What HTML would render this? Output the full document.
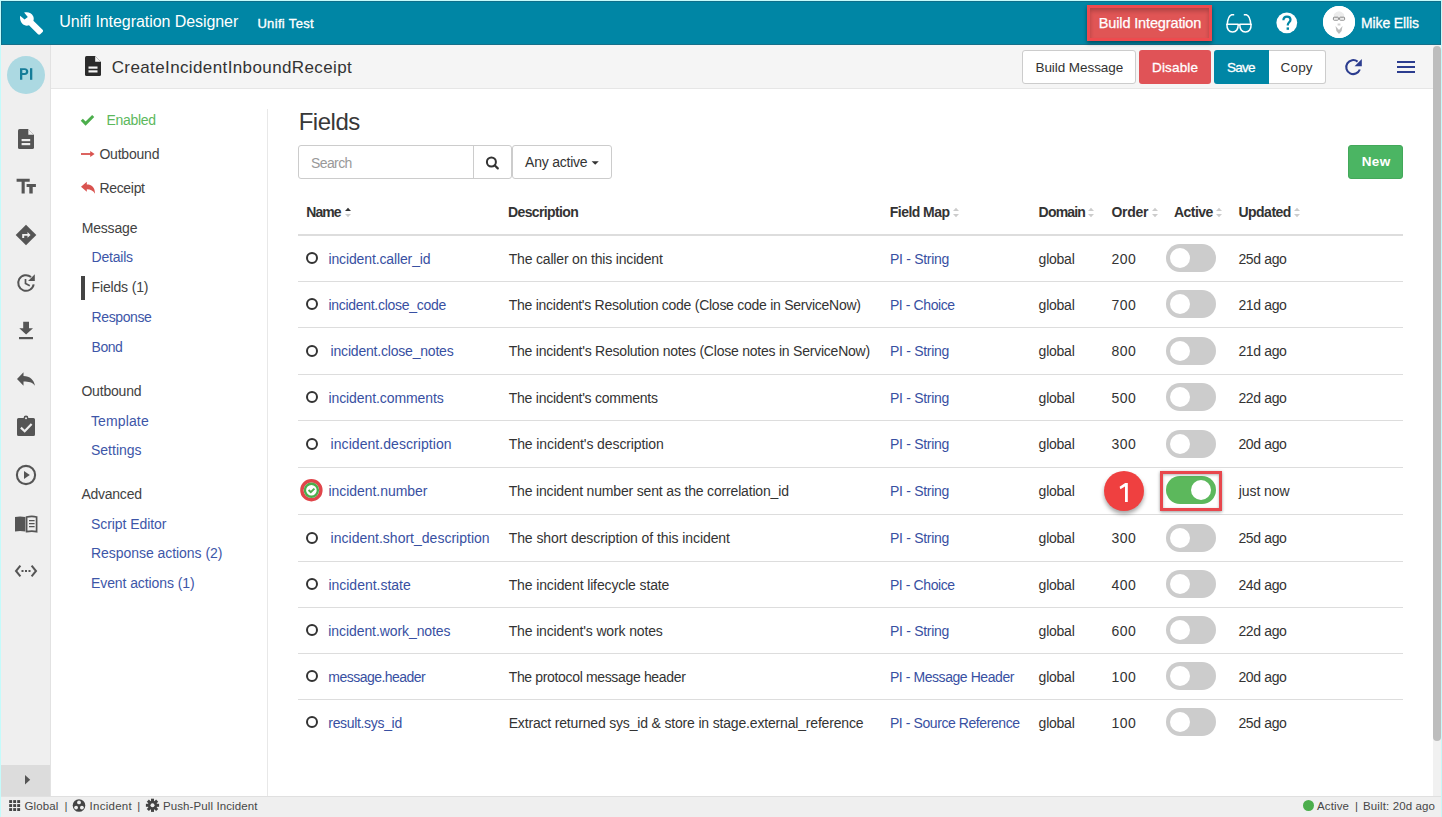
<!DOCTYPE html>
<html><head><meta charset="utf-8"><style>
html,body{margin:0;padding:0;}
body{width:1442px;height:817px;position:relative;overflow:hidden;background:#fff;font-family:"Liberation Sans",sans-serif;}
.a{position:absolute;}
.t{position:absolute;white-space:nowrap;line-height:1;}
</style></head><body>
<div class="a" style="left:0px;top:0px;width:1442px;height:817px;background:#c4fbfb;"></div>
<div class="a" style="left:1px;top:1px;width:1440px;height:816px;background:#ffffff;"></div>
<div class="a" style="left:1px;top:1px;width:1440px;height:44px;background:#0086a5;"></div>
<div class="a" style="left:1px;top:44px;width:1440px;height:1px;background:#16708a;"></div>
<div class="a" style="left:51px;top:45px;width:1382px;height:1px;background:#c6eef8;"></div>
<div class="a" style="left:1px;top:45px;width:49px;height:1px;background:#bfe6f0;"></div>
<div class="a" style="left:1px;top:1px;width:1440px;height:1px;background:#0f6f8a;"></div>
<div class="a" style="left:1px;top:1px;width:1px;height:44px;background:#0f6f8a;"></div>
<div class="a" style="left:1440px;top:1px;width:1px;height:44px;background:#0f6f8a;"></div>
<div class="a" style="left:1px;top:45px;width:50px;height:751px;background:#efefef;border-right:1px solid #e2e2e2;box-sizing:border-box;"></div>
<div class="a" style="left:1px;top:765px;width:49px;height:31px;background:#dcdcdc;"></div>
<div class="a" style="left:51px;top:45px;width:1382px;height:44px;background:#f5f5f5;border-bottom:1px solid #e6e6e6;box-sizing:border-box;"></div>
<div class="a" style="left:267px;top:109px;width:1px;height:687px;background:#e8e8e8;"></div>
<div class="a" style="left:1px;top:796px;width:1440px;height:21px;background:#efefef;border-top:1px solid #e0e0e0;box-sizing:border-box;"></div>
<div class="a" style="left:1433px;top:45px;width:8px;height:751px;background:#f1f1f1;"></div>
<div class="a" style="left:1433px;top:46px;width:8px;height:695px;background:#bdbdbd;border-radius:4px;"></div>
<div class="t" style="left:59.30px;top:14.16px;font-size:16px;color:#ffffff;letter-spacing:-0.062px;">Unifi Integration Designer</div>
<div class="t" style="left:257.40px;top:16.70px;font-size:13px;color:#ffffff;letter-spacing:0.341px;-webkit-text-stroke:0.35px #fff;">Unifi Test</div>
<div class="a" style="left:1087px;top:5px;width:125px;height:36px;background:#e05555;border:3px solid #ee4a4e;box-sizing:border-box;box-shadow:0 2px 4px rgba(0,0,0,.45), inset 0 3px 4px rgba(0,0,0,.22);"></div>
<div class="t" style="left:1098.80px;top:15.73px;font-size:14.5px;color:#ffffff;letter-spacing:-0.141px;-webkit-text-stroke:0.25px #fff;">Build Integration</div>
<div class="t" style="left:1361.00px;top:16.15px;font-size:14px;color:#ffffff;letter-spacing:-0.128px;-webkit-text-stroke:0.3px #fff;">Mike Ellis</div>
<div class="a" style="left:1323px;top:6px;width:32px;height:32px;background:#ffffff;border-radius:50%;"></div>
<div class="t" style="left:111.70px;top:58.51px;font-size:17px;color:#333333;letter-spacing:0.386px;">CreateIncidentInboundReceipt</div>
<div class="a" style="left:1022px;top:50px;width:114px;height:34px;background:#fff;border:1px solid #cccccc;border-radius:3px;box-sizing:border-box;"></div>
<div class="t" style="left:1035.50px;top:61.17px;font-size:13.5px;color:#333333;letter-spacing:-0.072px;">Build Message</div>
<div class="a" style="left:1139px;top:50px;width:72px;height:34px;background:#e05357;border-radius:3px;"></div>
<div class="t" style="left:1152.00px;top:61.17px;font-size:13.5px;color:#fff;letter-spacing:0.163px;-webkit-text-stroke:0.3px #fff;">Disable</div>
<div class="a" style="left:1214px;top:50px;width:55px;height:34px;background:#0086a5;border-radius:3px 0 0 3px;"></div>
<div class="t" style="left:1227.00px;top:61.17px;font-size:13.5px;color:#fff;letter-spacing:-0.727px;-webkit-text-stroke:0.3px #fff;">Save</div>
<div class="a" style="left:1269px;top:50px;width:57px;height:34px;background:#fff;border:1px solid #cccccc;border-left:none;border-radius:0 3px 3px 0;box-sizing:border-box;"></div>
<div class="t" style="left:1280.50px;top:61.17px;font-size:13.5px;color:#333333;letter-spacing:0.193px;">Copy</div>
<div class="a" style="left:7px;top:56px;width:38px;height:38px;background:#acd9e2;border-radius:50%;"></div>
<svg class="a" style="left:18px;top:66px;" width="16" height="16" viewBox="0 0 16 16"><path d="M2 2.2 H6.6 C9.0 2.2 10.3 3.6 10.3 5.6 C10.3 7.6 9.0 9.0 6.6 9.0 H4.3 V13.8 H2 Z M4.3 4.1 V7.1 H6.5 C7.5 7.1 8.0 6.5 8.0 5.6 C8.0 4.7 7.5 4.1 6.5 4.1 Z" fill="#167d99"/><rect x="12" y="2.2" width="2.3" height="11.6" fill="#167d99"/></svg>
<div class="t" style="left:106.50px;top:112.85px;font-size:14px;color:#5cb85c;letter-spacing:-0.313px;">Enabled</div>
<div class="t" style="left:99.40px;top:146.85px;font-size:14px;color:#424242;letter-spacing:-0.204px;">Outbound</div>
<div class="t" style="left:99.40px;top:180.75px;font-size:14px;color:#424242;letter-spacing:-0.31px;">Receipt</div>
<div class="t" style="left:81.70px;top:221.15px;font-size:14px;color:#424242;letter-spacing:-0.173px;">Message</div>
<div class="t" style="left:91.60px;top:250.15px;font-size:14px;color:#3d56a8;letter-spacing:-0.228px;">Details</div>
<div class="a" style="left:81px;top:276px;width:4px;height:24px;background:#444;"></div>
<div class="t" style="left:91.60px;top:279.85px;font-size:14px;color:#424242;letter-spacing:-0.164px;">Fields (1)</div>
<div class="t" style="left:91.60px;top:309.75px;font-size:14px;color:#3d56a8;letter-spacing:-0.41px;">Response</div>
<div class="t" style="left:91.60px;top:340.15px;font-size:14px;color:#3d56a8;letter-spacing:-0.497px;">Bond</div>
<div class="t" style="left:81.40px;top:384.35px;font-size:14px;color:#424242;letter-spacing:-0.19px;">Outbound</div>
<div class="t" style="left:91.00px;top:413.65px;font-size:14px;color:#3d56a8;letter-spacing:0.123px;">Template</div>
<div class="t" style="left:91.00px;top:443.15px;font-size:14px;color:#3d56a8;letter-spacing:-0.001px;">Settings</div>
<div class="t" style="left:81.40px;top:487.15px;font-size:14px;color:#424242;letter-spacing:-0.243px;">Advanced</div>
<div class="t" style="left:91.00px;top:516.65px;font-size:14px;color:#3d56a8;letter-spacing:-0.069px;">Script Editor</div>
<div class="t" style="left:91.00px;top:546.15px;font-size:14px;color:#3d56a8;letter-spacing:-0.047px;">Response actions (2)</div>
<div class="t" style="left:91.00px;top:576.15px;font-size:14px;color:#3d56a8;letter-spacing:-0.092px;">Event actions (1)</div>
<div class="t" style="left:298.70px;top:109.98px;font-size:24px;color:#383838;letter-spacing:-0.476px;">Fields</div>
<div class="a" style="left:298px;top:145px;width:214px;height:34px;background:#fff;border:1px solid #cccccc;border-radius:3px;box-sizing:border-box;"></div>
<div class="a" style="left:473px;top:145px;width:1px;height:34px;background:#cccccc;"></div>
<div class="t" style="left:311.00px;top:155.95px;font-size:14px;color:#999999;letter-spacing:-0.596px;">Search</div>
<div class="a" style="left:512px;top:145px;width:100px;height:34px;background:#fff;border:1px solid #cccccc;border-radius:3px;box-sizing:border-box;"></div>
<div class="t" style="left:525.10px;top:154.75px;font-size:14px;color:#333333;letter-spacing:-0.234px;">Any active</div>
<div class="a" style="left:1348px;top:145px;width:55px;height:34px;background:#4bb563;border:1px solid #43a85a;border-radius:3px;box-sizing:border-box;"></div>
<div class="t" style="left:1361.70px;top:155.37px;font-size:13.5px;color:#fff;font-weight:bold;letter-spacing:0.345px;">New</div>
<div class="t" style="left:306.30px;top:205.15px;font-size:14px;color:#333333;font-weight:bold;letter-spacing:-0.983px;">Name</div>
<div class="t" style="left:508.00px;top:205.15px;font-size:14px;color:#333333;font-weight:bold;letter-spacing:-0.62px;">Description</div>
<div class="t" style="left:889.80px;top:205.15px;font-size:14px;color:#333333;font-weight:bold;letter-spacing:-0.543px;">Field Map</div>
<div class="t" style="left:1038.60px;top:205.15px;font-size:14px;color:#333333;font-weight:bold;letter-spacing:-0.802px;">Domain</div>
<div class="t" style="left:1111.40px;top:205.15px;font-size:14px;color:#333333;font-weight:bold;letter-spacing:-0.287px;">Order</div>
<div class="t" style="left:1174.00px;top:205.15px;font-size:14px;color:#333333;font-weight:bold;letter-spacing:-0.54px;">Active</div>
<div class="t" style="left:1238.40px;top:205.15px;font-size:14px;color:#333333;font-weight:bold;letter-spacing:-0.5px;">Updated</div>
<div class="a" style="left:298px;top:234px;width:1105px;height:2px;background:#dddddd;"></div>
<div class="t" style="left:328.40px;top:251.65px;font-size:14px;color:#3850a2;letter-spacing:-0.124px;">incident.caller_id</div>
<div class="t" style="left:508.70px;top:251.65px;font-size:14px;color:#333333;letter-spacing:-0.179px;">The caller on this incident</div>
<div class="t" style="left:889.90px;top:251.65px;font-size:14px;color:#3850a2;letter-spacing:-0.283px;">PI - String</div>
<div class="t" style="left:1038.60px;top:251.65px;font-size:14px;color:#333333;letter-spacing:-0.236px;">global</div>
<div class="t" style="left:1111.40px;top:251.65px;font-size:14px;color:#333333;letter-spacing:0.51px;">200</div>
<div class="t" style="left:1238.40px;top:251.65px;font-size:14px;color:#333333;letter-spacing:-0.352px;">25d ago</div>
<div class="a" style="left:306px;top:252px;width:12px;height:12px;border:2px solid #333;border-radius:50%;box-sizing:border-box;"></div>
<div class="a" style="left:1166px;top:244px;width:50px;height:28px;background:#cccccc;border-radius:14px;"></div>
<div class="a" style="left:1170px;top:248px;width:20px;height:20px;background:#fff;border-radius:50%;"></div>
<div class="t" style="left:328.40px;top:297.65px;font-size:14px;color:#3850a2;letter-spacing:-0.288px;">incident.close_code</div>
<div class="t" style="left:508.70px;top:297.65px;font-size:14px;color:#333333;letter-spacing:-0.26px;">The incident's Resolution code (Close code in ServiceNow)</div>
<div class="t" style="left:889.90px;top:297.65px;font-size:14px;color:#3850a2;letter-spacing:-0.403px;">PI - Choice</div>
<div class="t" style="left:1038.60px;top:297.65px;font-size:14px;color:#333333;letter-spacing:-0.236px;">global</div>
<div class="t" style="left:1111.40px;top:297.65px;font-size:14px;color:#333333;letter-spacing:0.51px;">700</div>
<div class="t" style="left:1238.40px;top:297.65px;font-size:14px;color:#333333;letter-spacing:-0.352px;">21d ago</div>
<div class="a" style="left:306px;top:298px;width:12px;height:12px;border:2px solid #333;border-radius:50%;box-sizing:border-box;"></div>
<div class="a" style="left:1166px;top:290px;width:50px;height:28px;background:#cccccc;border-radius:14px;"></div>
<div class="a" style="left:1170px;top:294px;width:20px;height:20px;background:#fff;border-radius:50%;"></div>
<div class="t" style="left:330.60px;top:344.15px;font-size:14px;color:#3850a2;letter-spacing:-0.197px;">incident.close_notes</div>
<div class="t" style="left:508.70px;top:344.15px;font-size:14px;color:#333333;letter-spacing:-0.227px;">The incident's Resolution notes (Close notes in ServiceNow)</div>
<div class="t" style="left:889.90px;top:344.15px;font-size:14px;color:#3850a2;letter-spacing:-0.283px;">PI - String</div>
<div class="t" style="left:1038.60px;top:344.15px;font-size:14px;color:#333333;letter-spacing:-0.236px;">global</div>
<div class="t" style="left:1111.40px;top:344.15px;font-size:14px;color:#333333;letter-spacing:0.51px;">800</div>
<div class="t" style="left:1238.40px;top:344.15px;font-size:14px;color:#333333;letter-spacing:-0.352px;">21d ago</div>
<div class="a" style="left:306px;top:345px;width:12px;height:12px;border:2px solid #333;border-radius:50%;box-sizing:border-box;"></div>
<div class="a" style="left:1166px;top:337px;width:50px;height:28px;background:#cccccc;border-radius:14px;"></div>
<div class="a" style="left:1170px;top:341px;width:20px;height:20px;background:#fff;border-radius:50%;"></div>
<div class="t" style="left:328.40px;top:390.65px;font-size:14px;color:#3850a2;letter-spacing:-0.081px;">incident.comments</div>
<div class="t" style="left:508.70px;top:390.65px;font-size:14px;color:#333333;letter-spacing:-0.233px;">The incident's comments</div>
<div class="t" style="left:889.90px;top:390.65px;font-size:14px;color:#3850a2;letter-spacing:-0.283px;">PI - String</div>
<div class="t" style="left:1038.60px;top:390.65px;font-size:14px;color:#333333;letter-spacing:-0.236px;">global</div>
<div class="t" style="left:1111.40px;top:390.65px;font-size:14px;color:#333333;letter-spacing:0.51px;">500</div>
<div class="t" style="left:1238.40px;top:390.65px;font-size:14px;color:#333333;letter-spacing:-0.352px;">22d ago</div>
<div class="a" style="left:306px;top:391px;width:12px;height:12px;border:2px solid #333;border-radius:50%;box-sizing:border-box;"></div>
<div class="a" style="left:1166px;top:383px;width:50px;height:28px;background:#cccccc;border-radius:14px;"></div>
<div class="a" style="left:1170px;top:387px;width:20px;height:20px;background:#fff;border-radius:50%;"></div>
<div class="t" style="left:330.60px;top:437.15px;font-size:14px;color:#3850a2;letter-spacing:0.056px;">incident.description</div>
<div class="t" style="left:508.70px;top:437.15px;font-size:14px;color:#333333;letter-spacing:-0.095px;">The incident's description</div>
<div class="t" style="left:889.90px;top:437.15px;font-size:14px;color:#3850a2;letter-spacing:-0.283px;">PI - String</div>
<div class="t" style="left:1038.60px;top:437.15px;font-size:14px;color:#333333;letter-spacing:-0.236px;">global</div>
<div class="t" style="left:1111.40px;top:437.15px;font-size:14px;color:#333333;letter-spacing:0.51px;">300</div>
<div class="t" style="left:1238.40px;top:437.15px;font-size:14px;color:#333333;letter-spacing:-0.352px;">20d ago</div>
<div class="a" style="left:306px;top:438px;width:12px;height:12px;border:2px solid #333;border-radius:50%;box-sizing:border-box;"></div>
<div class="a" style="left:1166px;top:430px;width:50px;height:28px;background:#cccccc;border-radius:14px;"></div>
<div class="a" style="left:1170px;top:434px;width:20px;height:20px;background:#fff;border-radius:50%;"></div>
<div class="t" style="left:328.40px;top:484.15px;font-size:14px;color:#3850a2;letter-spacing:-0.036px;">incident.number</div>
<div class="t" style="left:508.70px;top:484.15px;font-size:14px;color:#333333;letter-spacing:-0.171px;">The incident number sent as the correlation_id</div>
<div class="t" style="left:889.90px;top:484.15px;font-size:14px;color:#3850a2;letter-spacing:-0.283px;">PI - String</div>
<div class="t" style="left:1038.60px;top:484.15px;font-size:14px;color:#333333;letter-spacing:-0.236px;">global</div>
<div class="t" style="left:1238.75px;top:484.15px;font-size:14px;color:#333333;letter-spacing:-0.061px;">just now</div>
<div class="a" style="left:1166px;top:476px;width:50px;height:28px;background:#5cb85c;border-radius:14px;"></div>
<div class="a" style="left:1191px;top:480px;width:20px;height:20px;background:#fff;border-radius:50%;"></div>
<div class="t" style="left:330.60px;top:531.15px;font-size:14px;color:#3850a2;letter-spacing:0.01px;">incident.short_description</div>
<div class="t" style="left:508.70px;top:531.15px;font-size:14px;color:#333333;letter-spacing:-0.077px;">The short description of this incident</div>
<div class="t" style="left:889.90px;top:531.15px;font-size:14px;color:#3850a2;letter-spacing:-0.283px;">PI - String</div>
<div class="t" style="left:1038.60px;top:531.15px;font-size:14px;color:#333333;letter-spacing:-0.236px;">global</div>
<div class="t" style="left:1111.40px;top:531.15px;font-size:14px;color:#333333;letter-spacing:0.51px;">300</div>
<div class="t" style="left:1238.40px;top:531.15px;font-size:14px;color:#333333;letter-spacing:-0.352px;">25d ago</div>
<div class="a" style="left:306px;top:532px;width:12px;height:12px;border:2px solid #333;border-radius:50%;box-sizing:border-box;"></div>
<div class="a" style="left:1166px;top:524px;width:50px;height:28px;background:#cccccc;border-radius:14px;"></div>
<div class="a" style="left:1170px;top:528px;width:20px;height:20px;background:#fff;border-radius:50%;"></div>
<div class="t" style="left:328.40px;top:577.65px;font-size:14px;color:#3850a2;letter-spacing:-0.01px;">incident.state</div>
<div class="t" style="left:508.70px;top:577.65px;font-size:14px;color:#333333;letter-spacing:-0.13px;">The incident lifecycle state</div>
<div class="t" style="left:889.90px;top:577.65px;font-size:14px;color:#3850a2;letter-spacing:-0.403px;">PI - Choice</div>
<div class="t" style="left:1038.60px;top:577.65px;font-size:14px;color:#333333;letter-spacing:-0.236px;">global</div>
<div class="t" style="left:1111.40px;top:577.65px;font-size:14px;color:#333333;letter-spacing:0.51px;">400</div>
<div class="t" style="left:1238.40px;top:577.65px;font-size:14px;color:#333333;letter-spacing:-0.352px;">24d ago</div>
<div class="a" style="left:306px;top:578px;width:12px;height:12px;border:2px solid #333;border-radius:50%;box-sizing:border-box;"></div>
<div class="a" style="left:1166px;top:570px;width:50px;height:28px;background:#cccccc;border-radius:14px;"></div>
<div class="a" style="left:1170px;top:574px;width:20px;height:20px;background:#fff;border-radius:50%;"></div>
<div class="t" style="left:328.30px;top:623.65px;font-size:14px;color:#3850a2;letter-spacing:-0.081px;">incident.work_notes</div>
<div class="t" style="left:508.70px;top:623.65px;font-size:14px;color:#333333;letter-spacing:-0.142px;">The incident's work notes</div>
<div class="t" style="left:889.90px;top:623.65px;font-size:14px;color:#3850a2;letter-spacing:-0.283px;">PI - String</div>
<div class="t" style="left:1038.60px;top:623.65px;font-size:14px;color:#333333;letter-spacing:-0.236px;">global</div>
<div class="t" style="left:1111.40px;top:623.65px;font-size:14px;color:#333333;letter-spacing:0.51px;">600</div>
<div class="t" style="left:1238.40px;top:623.65px;font-size:14px;color:#333333;letter-spacing:-0.352px;">22d ago</div>
<div class="a" style="left:306px;top:624px;width:12px;height:12px;border:2px solid #333;border-radius:50%;box-sizing:border-box;"></div>
<div class="a" style="left:1166px;top:616px;width:50px;height:28px;background:#cccccc;border-radius:14px;"></div>
<div class="a" style="left:1170px;top:620px;width:20px;height:20px;background:#fff;border-radius:50%;"></div>
<div class="t" style="left:328.30px;top:669.65px;font-size:14px;color:#3850a2;letter-spacing:-0.523px;">message.header</div>
<div class="t" style="left:508.70px;top:669.65px;font-size:14px;color:#333333;letter-spacing:-0.342px;">The protocol message header</div>
<div class="t" style="left:889.90px;top:669.65px;font-size:14px;color:#3850a2;letter-spacing:-0.428px;">PI - Message Header</div>
<div class="t" style="left:1038.60px;top:669.65px;font-size:14px;color:#333333;letter-spacing:-0.236px;">global</div>
<div class="t" style="left:1111.40px;top:669.65px;font-size:14px;color:#333333;letter-spacing:0.51px;">100</div>
<div class="t" style="left:1238.40px;top:669.65px;font-size:14px;color:#333333;letter-spacing:-0.352px;">20d ago</div>
<div class="a" style="left:306px;top:670px;width:12px;height:12px;border:2px solid #333;border-radius:50%;box-sizing:border-box;"></div>
<div class="a" style="left:1166px;top:662px;width:50px;height:28px;background:#cccccc;border-radius:14px;"></div>
<div class="a" style="left:1170px;top:666px;width:20px;height:20px;background:#fff;border-radius:50%;"></div>
<div class="t" style="left:328.30px;top:715.65px;font-size:14px;color:#3850a2;letter-spacing:-0.328px;">result.sys_id</div>
<div class="t" style="left:508.70px;top:715.65px;font-size:14px;color:#333333;letter-spacing:-0.174px;">Extract returned sys_id &amp; store in stage.external_reference</div>
<div class="t" style="left:889.90px;top:715.65px;font-size:14px;color:#3850a2;letter-spacing:-0.417px;">PI - Source Reference</div>
<div class="t" style="left:1038.60px;top:715.65px;font-size:14px;color:#333333;letter-spacing:-0.236px;">global</div>
<div class="t" style="left:1111.40px;top:715.65px;font-size:14px;color:#333333;letter-spacing:0.51px;">100</div>
<div class="t" style="left:1238.40px;top:715.65px;font-size:14px;color:#333333;letter-spacing:-0.352px;">25d ago</div>
<div class="a" style="left:306px;top:716px;width:12px;height:12px;border:2px solid #333;border-radius:50%;box-sizing:border-box;"></div>
<div class="a" style="left:1166px;top:708px;width:50px;height:28px;background:#cccccc;border-radius:14px;"></div>
<div class="a" style="left:1170px;top:712px;width:20px;height:20px;background:#fff;border-radius:50%;"></div>
<div class="a" style="left:298px;top:281px;width:1105px;height:1px;background:#dddddd;"></div>
<div class="a" style="left:298px;top:327px;width:1105px;height:1px;background:#dddddd;"></div>
<div class="a" style="left:298px;top:374px;width:1105px;height:1px;background:#dddddd;"></div>
<div class="a" style="left:298px;top:420px;width:1105px;height:1px;background:#dddddd;"></div>
<div class="a" style="left:298px;top:467px;width:1105px;height:1px;background:#dddddd;"></div>
<div class="a" style="left:298px;top:514px;width:1105px;height:1px;background:#dddddd;"></div>
<div class="a" style="left:298px;top:561px;width:1105px;height:1px;background:#dddddd;"></div>
<div class="a" style="left:298px;top:607px;width:1105px;height:1px;background:#dddddd;"></div>
<div class="a" style="left:298px;top:653px;width:1105px;height:1px;background:#dddddd;"></div>
<div class="a" style="left:298px;top:699px;width:1105px;height:1px;background:#dddddd;"></div>
<div class="a" style="left:1160px;top:471px;width:62px;height:40px;border:3px solid #e8474d;box-sizing:border-box;box-shadow:0 1px 3px rgba(0,0,0,.4), inset 0 1px 3px rgba(0,0,0,.3);"></div>
<div class="a" style="left:1104px;top:471px;width:40px;height:40px;background:#ef4040;border-radius:50%;box-shadow:0 3px 4px rgba(0,0,0,.35);"></div>
<svg class="a" style="left:1118px;top:482px;" width="12" height="21" viewBox="0 0 12 21"><path d="M7.2 1 L9.8 1 L9.8 20 L7 20 L7 4.6 L2.4 7.2 L1.6 4.8 Z" fill="#fff"/></svg>
<svg class="a" style="left:299px;top:478px;" width="25" height="25" viewBox="0 0 25 25"><circle cx="12.4" cy="12.2" r="9.5" fill="none" stroke="#e0454a" stroke-width="3.4"/><circle cx="12.4" cy="12.2" r="6.5" fill="none" stroke="#4cae4c" stroke-width="2.4"/><path d="M9.6 12 L11.8 14.2 L15.4 10.6" fill="none" stroke="#4cae4c" stroke-width="2"/></svg>
<svg class="a" style="left:12px;top:6px;" width="36" height="34" viewBox="0 0 36 34"><path fill="#fff" d="M8.1 9.8 L12.6 13.6 L15.8 11 L12.1 6.6 C15.5 5.4 19.6 6.6 21.2 10.2 C21.9 11.8 21.9 13.4 21.4 14.8 L30.6 23.8 C31.2 24.4 31.2 25.4 30.6 26 L28.2 28.2 C27.6 28.8 26.6 28.8 26 28.2 L17 19.2 C15.6 19.8 13.9 19.8 12.3 19.1 C9.1 17.6 7.6 13.6 8.1 9.8 Z"/></svg>
<svg class="a" style="left:1224px;top:12px;" width="30" height="23" viewBox="0 0 30 23"><g fill="none" stroke="#fff" stroke-width="1.5" stroke-linejoin="round"><path d="M2.9 12.2 H14.2 C14.4 17.2 12.2 20.1 8.6 20.1 C5.0 20.1 2.7 17.2 2.9 12.2 Z"/><path d="M15.8 12.2 H27.1 C27.3 17.2 25.0 20.1 21.4 20.1 C17.8 20.1 15.6 17.2 15.8 12.2 Z"/><path d="M14.2 13.2 Q15 12.6 15.8 13.2"/><path d="M3.2 13 C3.6 7.5 5.2 3.5 7.6 2.8 L10.2 2.8"/><path d="M26.8 13 C26.4 7.5 24.8 3.5 22.4 2.8 L19.8 2.8"/></g></svg>
<svg class="a" style="left:1276px;top:12px;" width="22" height="22" viewBox="0 0 22 22"><circle cx="10.8" cy="10.8" r="10.4" fill="#fff"/><path d="M7.4 8.2 C7.4 5.9 9.0 4.6 11.0 4.6 C13.0 4.6 14.5 5.9 14.5 7.8 C14.5 10.2 11.8 10.4 11.8 12.8 L11.8 13.6" fill="none" stroke="#0086a5" stroke-width="2.2"/><rect x="10.6" y="15.4" width="2.4" height="2.4" fill="#0086a5"/></svg>
<svg class="a" style="left:1323px;top:6px;" width="32" height="32" viewBox="0 0 32 32"><circle cx="16" cy="16" r="16" fill="#fff"/><path d="M11 8 Q16 2.5 21 8 L21.5 13 L10.5 13 Z" fill="#ececec"/><rect x="10.4" y="11.2" width="5" height="3" rx="0.8" fill="none" stroke="#8a8a8a" stroke-width="1"/><rect x="16.6" y="11.2" width="5" height="3" rx="0.8" fill="none" stroke="#8a8a8a" stroke-width="1"/><path d="M12.5 20 L16 24 L19.5 20 L18.6 25 L16 28 L13.4 25 Z" fill="#bdbdbd"/><path d="M14.6 17.5 H17.4 V19.5 H14.6 Z" fill="#d0d0d0"/></svg>
<svg class="a" style="left:84px;top:55px;" width="18" height="22" viewBox="0 0 18 22"><path d="M2.5 1 L11 1 L17 7 L17 19.5 Q17 21 15.5 21 L2.5 21 Q1 21 1 19.5 L1 2.5 Q1 1 2.5 1 Z" fill="#2b2b2b"/><path d="M11.2 1.2 L11.2 6.8 L16.8 6.8 Z" fill="#f5f5f5"/><rect x="4.5" y="11.5" width="9" height="2.2" fill="#f5f5f5"/><rect x="4.5" y="15.3" width="9" height="2.2" fill="#f5f5f5"/></svg>
<svg class="a" style="left:1344px;top:58px;" width="20" height="18" viewBox="0 0 20 18"><path d="M15.8 11.5 A7 7 0 1 1 13.6 3.6" fill="none" stroke="#2c3d8f" stroke-width="2.1"/><path d="M17.8 1 L17.8 8.2 L10.6 8.2 Z" fill="#2c3d8f"/></svg>
<svg class="a" style="left:1397px;top:60px;" width="19" height="14" viewBox="0 0 19 14"><rect x="0" y="1" width="18" height="2" fill="#2c3d8f"/><rect x="0" y="6" width="18" height="2" fill="#2c3d8f"/><rect x="0" y="11" width="18" height="2" fill="#2c3d8f"/></svg>
<svg class="a" style="left:17px;top:128px;" width="18" height="22" viewBox="0 0 18 22"><path d="M2.6 1 L11 1 L17 7 L17 19.4 Q17 21 15.4 21 L2.6 21 Q1 21 1 19.4 L1 2.6 Q1 1 2.6 1 Z" fill="#555555"/><path d="M11.3 1.3 L11.3 6.7 L16.7 6.7 Z" fill="#efefef"/><rect x="4.6" y="11" width="8.6" height="2.2" fill="#efefef"/><rect x="4.6" y="15" width="8.6" height="2.2" fill="#efefef"/></svg>
<svg class="a" style="left:16px;top:178px;" width="20" height="17" viewBox="0 0 20 17"><path d="M0.6 0.7 H13.7 V3.7 H8.7 V15.6 H5.6 V3.7 H0.6 Z M10.6 6 H19.9 V9 H16.7 V15.6 H13.3 V9 H10.6 Z" fill="#555555"/></svg>
<svg class="a" style="left:15px;top:224px;" width="22" height="22" viewBox="0 0 22 22"><path d="M11 0.7 L21.3 11 L11 21.3 L0.7 11 Z" fill="#555555"/><path d="M7.2 14 V10 H12.5 V8 L15.6 10.9 L12.5 13.8 V11.8 H9.2 V14 Z" fill="#efefef"/></svg>
<svg class="a" style="left:12px;top:268px;" width="28" height="28" viewBox="0 0 28 28"><path d="M21.68 16.35 A7.8 7.8 0 1 1 19.01 9.02" fill="none" stroke="#555555" stroke-width="2"/><path d="M22.8 6.3 V13 H16.1 Z" fill="#555555"/><path d="M13.5 11 V15.6 L17.8 17.8" fill="none" stroke="#555555" stroke-width="1.7"/></svg>
<svg class="a" style="left:18px;top:321px;" width="16" height="20" viewBox="0 0 16 20"><path d="M5.2 0.8 H11 V7.2 H15 L8.1 13.6 L1.3 7.2 H5.2 Z" fill="#555555"/><rect x="1" y="16" width="14" height="2.2" fill="#555555"/></svg>
<svg class="a" style="left:16px;top:371px;" width="20" height="16" viewBox="0 0 20 16"><path d="M1 8 L7.5 1.2 V5 C14 5 18 9 19 14.8 C16.2 11.2 12.8 10.6 7.5 10.6 V14.8 Z" fill="#555555"/></svg>
<svg class="a" style="left:16px;top:415px;" width="20" height="22" viewBox="0 0 20 22"><path d="M2.5 3 H7.6 A2.4 2.4 0 0 1 12.4 3 H17.5 Q19 3 19 4.5 V19.5 Q19 21 17.5 21 H2.5 Q1 21 1 19.5 V4.5 Q1 3 2.5 3 Z" fill="#555555"/><circle cx="10" cy="3.2" r="1" fill="#efefef"/><path d="M4.9 12.6 L8.7 16.2 L15.6 9" fill="none" stroke="#efefef" stroke-width="2.2"/></svg>
<svg class="a" style="left:15px;top:464px;" width="22" height="22" viewBox="0 0 22 22"><circle cx="11" cy="11" r="9.1" fill="none" stroke="#555555" stroke-width="2.1"/><path d="M9 7 L14.8 11 L9 15 Z" fill="#555555"/></svg>
<svg class="a" style="left:14px;top:514px;" width="24" height="19" viewBox="0 0 24 19"><path d="M1 3 Q6 1.8 11.4 3 V17.6 Q6 16.6 1 17.6 Z" fill="#555555"/><path d="M12.6 3 Q18 1.8 22.6 3 V17.6 Q18 16.6 12.6 17.6 Z" fill="none" stroke="#555555" stroke-width="1.7"/><path d="M15 6.6 H20.6 M15 9.6 H20.6 M15 12.6 H20.6" stroke="#555555" stroke-width="1.3"/></svg>
<svg class="a" style="left:14px;top:563px;" width="24" height="16" viewBox="0 0 24 16"><path d="M6.4 2.6 L2 8 L6.4 13.4" fill="none" stroke="#555555" stroke-width="2"/><path d="M17.6 2.6 L22 8 L17.6 13.4" fill="none" stroke="#555555" stroke-width="2"/><rect x="7.5" y="7" width="2" height="2" fill="#555555"/><rect x="11" y="7" width="2" height="2" fill="#555555"/><rect x="14.5" y="7" width="2" height="2" fill="#555555"/></svg>
<svg class="a" style="left:24px;top:774px;" width="8" height="12" viewBox="0 0 8 12"><path d="M1 1 L6.2 5.8 L1 10.6 Z" fill="#555555"/></svg>
<svg class="a" style="left:80px;top:114px;" width="16" height="13" viewBox="0 0 16 13"><path d="M1.8 5.8 L5.6 9.6 L13.2 2" fill="none" stroke="#4cae4c" stroke-width="3"/></svg>
<svg class="a" style="left:80px;top:150px;" width="16" height="8" viewBox="0 0 16 8"><path d="M1 4 H11" stroke="#d9534f" stroke-width="1.8"/><path d="M10.2 0.9 L14.6 4 L10.2 7.1 Z" fill="#d9534f"/></svg>
<svg class="a" style="left:80px;top:181px;" width="16" height="14" viewBox="0 0 16 14"><path d="M1 5.8 L6.8 0.8 V3.6 C11.8 3.6 15 6.2 15 12.8 C13.4 9.8 10.8 8.2 6.8 8.2 V10.8 Z" fill="#d9534f"/></svg>
<svg class="a" style="left:484px;top:155px;" width="17" height="16" viewBox="0 0 17 16"><circle cx="7.4" cy="7.0" r="4.5" fill="none" stroke="#333" stroke-width="2"/><path d="M10.6 10.3 L13.8 13.4" stroke="#333" stroke-width="2.2" stroke-linecap="round"/></svg>
<svg class="a" style="left:591px;top:160px;" width="9" height="6" viewBox="0 0 9 6"><path d="M0.6 1.2 H7.8 L4.2 4.8 Z" fill="#333"/></svg>
<svg class="a" style="left:345.2px;top:207px;" width="7" height="11" viewBox="0 0 7 11"><path d="M0 4 L3 0.7 L6 4 Z" fill="#333"/><path d="M0 7 L3 10.3 L6 7 Z" fill="#cccccc"/></svg>
<svg class="a" style="left:953px;top:207px;" width="7" height="11" viewBox="0 0 7 11"><path d="M0 4 L3 0.7 L6 4 Z" fill="#cccccc"/><path d="M0 7 L3 10.3 L6 7 Z" fill="#cccccc"/></svg>
<svg class="a" style="left:1088.3px;top:207px;" width="7" height="11" viewBox="0 0 7 11"><path d="M0 4 L3 0.7 L6 4 Z" fill="#cccccc"/><path d="M0 7 L3 10.3 L6 7 Z" fill="#cccccc"/></svg>
<svg class="a" style="left:1151.6px;top:207px;" width="7" height="11" viewBox="0 0 7 11"><path d="M0 4 L3 0.7 L6 4 Z" fill="#cccccc"/><path d="M0 7 L3 10.3 L6 7 Z" fill="#cccccc"/></svg>
<svg class="a" style="left:1216.1px;top:207px;" width="7" height="11" viewBox="0 0 7 11"><path d="M0 4 L3 0.7 L6 4 Z" fill="#cccccc"/><path d="M0 7 L3 10.3 L6 7 Z" fill="#cccccc"/></svg>
<svg class="a" style="left:1294.2px;top:207px;" width="7" height="11" viewBox="0 0 7 11"><path d="M0 4 L3 0.7 L6 4 Z" fill="#cccccc"/><path d="M0 7 L3 10.3 L6 7 Z" fill="#cccccc"/></svg>
<svg class="a" style="left:9px;top:800px;" width="12" height="12" viewBox="0 0 12 12"><rect x="0.2" y="0.1" width="2.9" height="2.9" fill="#444"/><rect x="0.2" y="4.1" width="2.9" height="2.9" fill="#444"/><rect x="0.2" y="8.1" width="2.9" height="2.9" fill="#444"/><rect x="4.2" y="0.1" width="2.9" height="2.9" fill="#444"/><rect x="4.2" y="4.1" width="2.9" height="2.9" fill="#444"/><rect x="4.2" y="8.1" width="2.9" height="2.9" fill="#444"/><rect x="8.2" y="0.1" width="2.9" height="2.9" fill="#444"/><rect x="8.2" y="4.1" width="2.9" height="2.9" fill="#444"/><rect x="8.2" y="8.1" width="2.9" height="2.9" fill="#444"/></svg>
<svg class="a" style="left:72px;top:799px;" width="14" height="14" viewBox="0 0 14 14"><circle cx="7" cy="6.5" r="6.3" fill="#444"/><circle cx="7" cy="3.4" r="1.9" fill="#efefef"/><circle cx="4.1" cy="8.6" r="1.9" fill="#efefef"/><circle cx="9.9" cy="8.6" r="1.9" fill="#efefef"/></svg>
<svg class="a" style="left:145px;top:798px;" width="15" height="15" viewBox="0 0 15 15"><g fill="#444" transform="translate(7.5 7.3)"><circle r="4.6"/><rect x="-1.5" y="-6.6" width="3" height="3.4" transform="rotate(0)"/><rect x="-1.5" y="-6.6" width="3" height="3.4" transform="rotate(45)"/><rect x="-1.5" y="-6.6" width="3" height="3.4" transform="rotate(90)"/><rect x="-1.5" y="-6.6" width="3" height="3.4" transform="rotate(135)"/><rect x="-1.5" y="-6.6" width="3" height="3.4" transform="rotate(180)"/><rect x="-1.5" y="-6.6" width="3" height="3.4" transform="rotate(225)"/><rect x="-1.5" y="-6.6" width="3" height="3.4" transform="rotate(270)"/><rect x="-1.5" y="-6.6" width="3" height="3.4" transform="rotate(315)"/></g><circle cx="7.5" cy="7.3" r="2" fill="#efefef"/></svg>
<div class="t" style="left:24.50px;top:800.57px;font-size:11.5px;color:#474747;letter-spacing:0.093px;">Global</div>
<div class="t" style="left:64.50px;top:800.57px;font-size:11.5px;color:#474747;">|</div>
<div class="t" style="left:89.50px;top:800.57px;font-size:11.5px;color:#474747;letter-spacing:0.27px;">Incident</div>
<div class="t" style="left:137.30px;top:800.57px;font-size:11.5px;color:#474747;">|</div>
<div class="t" style="left:162.90px;top:800.57px;font-size:11.5px;color:#474747;letter-spacing:0.112px;">Push-Pull Incident</div>
<div class="a" style="left:1303px;top:800px;width:11px;height:11px;background:#4cae4c;border-radius:50%;"></div>
<div class="t" style="left:1317.00px;top:800.57px;font-size:11.5px;color:#474747;letter-spacing:0.133px;">Active</div>
<div class="t" style="left:1355.00px;top:800.57px;font-size:11.5px;color:#474747;">|</div>
<div class="t" style="left:1363.00px;top:800.57px;font-size:11.5px;color:#474747;letter-spacing:0.129px;">Built: 20d ago</div>
</body></html>
